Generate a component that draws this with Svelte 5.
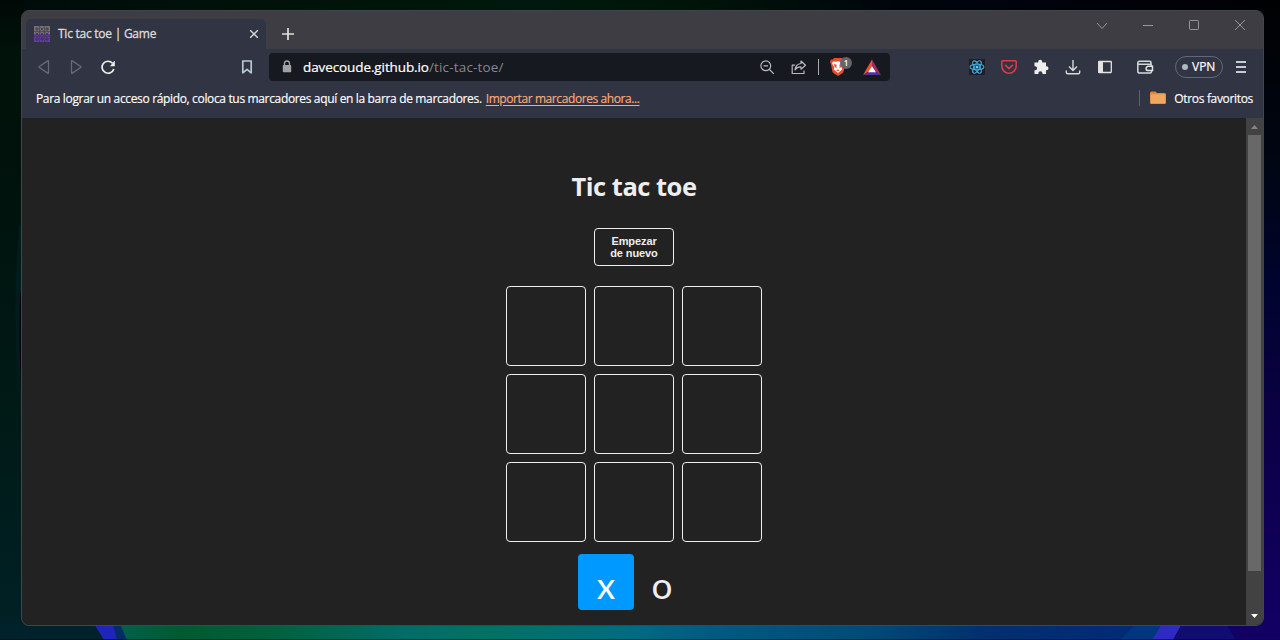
<script>
  const cells = Array(9).fill('');
  let turn = $state('x');
</script>

<div class="desktop">
  <svg class="wallpaper" viewBox="0 0 1280 640" aria-hidden="true">
    <defs>
      <linearGradient id="top"><stop offset="0" stop-color="#000b0a"/><stop offset=".3" stop-color="#00150a"/><stop offset=".42" stop-color="#00180d"/><stop offset=".53" stop-color="#001508"/><stop offset=".7" stop-color="#00050c"/><stop offset=".85" stop-color="#00020a"/><stop offset="1" stop-color="#000103"/></linearGradient>
      <linearGradient id="left" x2="0" y2="1"><stop offset="0" stop-color="#000907"/><stop offset=".08" stop-color="#001209"/><stop offset=".25" stop-color="#00120b"/><stop offset=".65" stop-color="#001a16"/><stop offset="1" stop-color="#002126"/></linearGradient>
      <linearGradient id="right" x2="0" y2="1"><stop offset="0" stop-color="#000102"/><stop offset=".25" stop-color="#000612"/><stop offset=".45" stop-color="#00032e"/><stop offset=".67" stop-color="#0b0046"/><stop offset="1" stop-color="#130066"/></linearGradient>
      <linearGradient id="floor"><stop offset="0" stop-color="#00614b"/><stop offset=".06" stop-color="#005a30"/><stop offset=".14" stop-color="#00603a"/><stop offset=".27" stop-color="#006c66"/><stop offset=".36" stop-color="#007264"/><stop offset=".49" stop-color="#006c80"/><stop offset=".57" stop-color="#005a80"/><stop offset=".72" stop-color="#004b76"/><stop offset=".83" stop-color="#00306e"/><stop offset="1" stop-color="#002978"/></linearGradient>
    </defs>
    <rect width="1280" height="12" fill="url(#top)"/>
    <rect width="24" height="640" fill="url(#left)"/>
    <rect x="1260" width="20" height="640" fill="url(#right)"/>
    <path d="M19 225q-8 95 1 190h4V225z" fill="#001c1c"/>
    <path d="M20 293h3v98h-2q-2-48-1-98z" fill="#000014"/>
    <rect y="624" width="125" height="16" fill="#00222b"/>
    <rect x="118" y="624" width="1040" height="16" fill="url(#floor)"/>
    <path d="M94 624h20l12 16h-22z" fill="#1f25b8"/>
    <path d="M113 624h7l7 16h-10z" fill="#002c68"/>
    <path d="M1120 640l15-15h30v15z" fill="#003680"/>
    <path d="M1152 640l10-16h20l-9 16z" fill="#302bc0"/>
    <path d="M1182 624h50l10 16h-69z" fill="#100c72"/>
    <path d="M1226 624h54v16h-44z" fill="#120062"/>
    <path d="M0 639.5h1280" stroke="#000b18" stroke-opacity=".6"/>
  </svg>

  <div class="window">
    <header class="titlebar">
      <div class="tab">
        <svg class="favicon" width="16" height="16" viewBox="0 0 16 16">
          <rect width="16" height="8" fill="#77706e"/><rect y="8" width="16" height="8" fill="#6339ae"/>
          <path d="M0 5.500h16M0 10.500h16M5.500 0v16M10.500 0v16" stroke="#3a3546" stroke-width=".6"/>
          <path d="M2 2h2v2H2zM12 2h2v2h-2zM2 12h2v2H2zM7 12h2v2H7zM12 12h2v2h-2zM6.500 1.500l3 3m0-3l-3 3M1.500 6.500l3 3m0-3l-3 3M6.500 6.500l3 3m0-3l-3 3M11.500 6.500l3 3m0-3l-3 3" fill="none" stroke="#302b49" stroke-width=".7"/>
        </svg>
        <span class="tab-title">Tic tac toe | Game</span>
        <svg class="close-tab" width="10" height="10" viewBox="0 0 10 10"><path d="M1.200 1.200l7.600 7.600m0-7.600L1.200 8.800" stroke="#d8d8d8" stroke-width="1.400"/></svg>
      </div>
      <svg class="new-tab" width="12" height="12" viewBox="0 0 12 12"><path d="M6 0v12M0 6h12" stroke="#e3e0dc" stroke-width="1.700"/></svg>
      <div class="controls">
        <svg width="46" height="30" viewBox="0 0 46 30"><path d="M18 12l5 5.500 5-5.500" class="ctl"/></svg>
        <svg width="46" height="30" viewBox="0 0 46 30"><path d="M18 14.500h10" class="ctl"/></svg>
        <svg width="46" height="30" viewBox="0 0 46 30"><rect x="18.500" y="9.500" width="9" height="9" rx=".8" class="ctl"/></svg>
        <svg width="46" height="30" viewBox="0 0 46 30"><path d="M18 9l10 10m0-10L18 19" class="ctl"/></svg>
      </div>
    </header>

    <div class="toolbar">
      <svg class="icon" viewBox="-16 -16 32 32"><path d="M4.500-5.800v11.600q0 .8-.8.300L-4.700.6q-.7-.6 0-1.200l8.400-5.500q.8-.500.800.300z" fill="none" stroke="#696b72" stroke-width="1.300"/></svg>
      <svg class="icon" viewBox="-16 -16 32 32"><path d="M-4.500-5.800v11.600q0 .8.800.300L4.700.6q.7-.6 0-1.200l-8.400-5.500q-.8-.5-.8.300z" fill="none" stroke="#696b72" stroke-width="1.300"/></svg>
      <svg class="icon" viewBox="-16 -16 32 32"><path d="M4.500-3.800A6 6 0 1 0 5.800 2" fill="none" stroke="#eeeeea" stroke-width="1.700"/><path d="M6.800-5.600v4.300q0 .6-.6.600H2l4-5.100q.8-.6.8.200z" fill="#eeeeea"/></svg>
      <svg class="icon bookmark" viewBox="-16 -16 32 32"><path d="M-4.200-6h8.400V5.800L0 2.300l-4.200 3.500z" fill="none" stroke="#bac7ce" stroke-width="1.700" stroke-linejoin="round"/></svg>
      <div class="address">
        <svg class="lock" width="10" height="14" viewBox="0 0 10 14"><path d="M2.500 6V3.500a2.500 2.500 0 0 1 5 0V6" fill="none" stroke="#a0a2a5" stroke-width="1.300"/><rect x=".8" y="5" width="8.400" height="7.200" rx=".8" fill="#a0a2a5"/></svg>
        <span class="url"><b>davecoude.github.io</b><span>/tic-tac-toe/</span></span>
        <svg class="icon" viewBox="-16 -16 32 32"><circle cx="-1.200" cy="-1.200" r="4.900" class="thin"/><path d="M2.500 2.500L6.800 6.800M-3.500-1.200h4.600" class="thin"/></svg>
        <svg class="icon share" viewBox="-16 -16 32 32"><path d="M-4-1.800h-2.800v8.300H5V3.400M2-6L6.500-1.800 2 2.200V0q-4-.3-6 2.800 .6-5.700 6-6.300z" class="thin" stroke-linejoin="round"/></svg>
        <i class="divider"></i>
        <div class="shield">
          <svg width="16" height="18" viewBox="0 0 16 18"><path d="M4 0h8l1.500 1.800 1.800-.2.700 2.700-.8 1.500-1.500 7.500q-.4 1.400-2.500 2.800L8 18l-3.200-1.900q-2.100-1.400-2.500-2.800L.8 5.800 0 4.300l.7-2.700 1.800.2z" fill="#e94b2b"/><path d="M3 3.500l3 .3 2-.5 2 .5 3-.3 1 2-2.400 4 .6 2L8 15l-4.200-3.500.6-2L2 5.500z" fill="#fff"/><path d="M4 6l2.800.7L6.200 9l1 1.500L4.600 9zM12 6l-2.800.7.6 2.300-1 1.500L11.400 9zM6.200 12.300L8 11.500l1.800.8L8 13.300z" fill="#e94b2b"/></svg>
          <span class="count">1</span>
        </div>
        <svg class="bat" width="18" height="17" viewBox="0 0 18 17"><path d="M9 .5L0 16l9-5.500z" fill="#f25130"/><path d="M9 .5L18 16 9 10.500z" fill="#a32b63"/><path d="M0 16l5.500-3.500h7L18 16z" fill="#513394"/><path d="M9 7.200l-4 6h8z" fill="#fff"/></svg>
      </div>
      <div class="extensions">
        <svg class="icon" viewBox="-16 -16 32 32"><rect x="-8" y="-8" width="16" height="16" fill="#211d23"/><g fill="none" stroke="#43a4d8" stroke-width="1.100"><ellipse rx="6.900" ry="2.700"/><ellipse rx="6.900" ry="2.700" transform="rotate(60)"/><ellipse rx="6.900" ry="2.700" transform="rotate(120)"/></g><circle r="1.500" fill="#6bcaf2"/></svg>
        <svg class="icon" viewBox="-16 -16 32 32"><path d="M-6.200-6.200H6.200q1 0 1 1V-1a7.200 7.200 0 0 1-14.400 0v-4.200q0-1 1-1z" fill="none" stroke="#d83c4c" stroke-width="1.600"/><path d="M-3.500-1.700L0 1.600 3.500-1.700" fill="none" stroke="#d83c4c" stroke-width="1.700" stroke-linecap="round"/></svg>
        <svg class="icon" viewBox="-16 -16 32 32"><path d="M-6.500-4.500h3.700v-.7a2 2 0 0 1 4 0v.7H5V-.8h.5a2 2 0 0 1 0 4H5v3.700H1.400v-.6a2 2 0 0 0-4 0v.6h-3.900V3.200h.6a2 2 0 0 0 0-4h-.6z" fill="#efeeec"/></svg>
        <svg class="icon" viewBox="-16 -16 32 32"><path d="M0-7V3.500M-4-.5l4 4 4-4M-6.700 3.500v1.700q0 1.500 1.500 1.500H5.200q1.500 0 1.500-1.500V3.500" fill="none" stroke="#d8dadb" stroke-width="1.400"/></svg>
        <svg class="icon" viewBox="-16 -16 32 32"><rect x="-6.300" y="-5.500" width="12.600" height="11" rx=".5" fill="none" stroke="#e5e3df" stroke-width="1.300"/><path d="M-6.500-6H-2V6h-4.500z" fill="#e5e3df"/></svg>
        <svg class="icon wallet" viewBox="-16 -16 32 32"><path d="M-7.200-3.500v7.800q0 1.800 1.800 1.800H5q1.500 0 1.500-1.500V-1.200q0-1.500-1.500-1.500H-5.200q-2 0-2-1.400 0-1.600 1.800-1.600H4.700q1.300 0 1.300 1.200v1.800" fill="none" stroke="#d3dada" stroke-width="1.500"/><path d="M7.500-.7H3.200a2.100 2.100 0 0 0 0 4.200h4.300z" fill="#313443" stroke="#e2e5e2" stroke-width="1.500"/></svg>
        <div class="vpn"><i></i><span>VPN</span></div>
        <svg class="icon menu" viewBox="-16 -16 32 32"><path d="M-5-5H5M-5 0H5M-5 5H5" stroke="#c5cdd0" stroke-width="2"/></svg>
      </div>
    </div>

    <div class="bookmarks">
      <span class="hint">Para lograr un acceso rápido, coloca tus marcadores aquí en la barra de marcadores.</span>
      <span class="import">Importar marcadores ahora...</span>
      <div class="other"><svg width="16" height="14" viewBox="0 0 16 14"><path d="M0 2q0-1.500 1.500-1.500h4L7 2h7.500Q16 2 16 3.500v8q0 1.500-1.500 1.500h-13Q0 13 0 11.500z" fill="#d98b3e"/><path d="M.7 3.300h14.600v9H.7z" fill="#f0a75f"/></svg><span>Otros favoritos</span></div>
    </div>

    <div class="page">
      <main>
        <h1>Tic tac toe</h1>
        <button class="reset" onclick={() => (turn = 'x')}>Empezar<br />de nuevo</button>
        <section class="board">
          {#each cells as cell}<div class="square">{cell}</div>{/each}
        </section>
        <section class="turns">
          <div class="turn" class:selected={turn === 'x'}><span>x</span></div>
          <div class="turn" class:selected={turn === 'o'}><span>o</span></div>
        </section>
      </main>
      <aside class="scrollbar">
        <svg width="17" height="17" viewBox="0 0 17 17"><path d="M5 11l3.500-4L12 11z" fill="#8b8082"/></svg>
        <div class="thumb"></div>
        <svg class="down" width="17" height="17" viewBox="0 0 17 17"><path d="M5 6h7l-3.500 4z" fill="#fff"/></svg>
      </aside>
    </div>
  </div>
</div>

<style>
  :global(body) { margin: 0; background: #000b0a; }
  * { box-sizing: border-box; }
  svg { display: block; flex: none; }
  .desktop { width: 1280px; height: 640px; padding: 10px 16px 14px 21px; position: relative; overflow: hidden; font-family: "Open Sans", "Noto Sans", sans-serif; }
  .wallpaper { position: absolute; inset: 0; width: 1280px; height: 640px; }
  .window { position: relative; height: 616px; border: 1px solid #3e4749; border-radius: 8px; overflow: hidden; display: flex; flex-direction: column; background: #313443; }
  .titlebar { height: 38px; flex: none; background: #3e3d44; display: flex; align-items: flex-start; padding-left: 4px; }
  .tab { margin-top: 8px; width: 240px; height: 30px; background: #313443; border-radius: 5px 5px 0 0; display: flex; align-items: center; padding: 0 7px 0 8px; }
  .tab-title { margin: 0 0 2px 8px; font-size: 12px; letter-spacing: -.25px; color: #dfdcd8; white-space: nowrap; -webkit-text-stroke: .3px; }
  .close-tab { margin-left: auto; }
  .new-tab { margin: 17px 0 0 16px; }
  .controls { display: flex; margin-left: auto; }
  .ctl { fill: none; stroke: #96959a; stroke-width: 1; }
  .toolbar { height: 36px; flex: none; display: flex; align-items: center; padding-left: 6px; }
  .icon { width: 32px; height: 32px; }
  .bookmark { margin-left: 107px; }
  .address { width: 621px; height: 28px; margin-left: 6px; border-radius: 4px; background: #171920; display: flex; align-items: center; padding: 0 9px 0 13px; }
  .url { margin-left: 11px; flex: 1; font-size: 13.5px; letter-spacing: -.1px; color: #858891; white-space: nowrap; line-height: 20px; }
  .url b { font-weight: 400; color: #fff; -webkit-text-stroke: .2px; }
  .url span { letter-spacing: .17px; }
  .thin { fill: none; stroke: #b8babd; stroke-width: 1.2; }
  .divider { width: 1px; height: 16px; background: #aaa9ad; margin: 0 11px 0 3px; }
  .shield { width: 24px; height: 18px; position: relative; margin-right: 9px; }
  .count { position: absolute; left: 10px; top: -1px; width: 12px; height: 12px; border-radius: 50%; background: #62666b; color: #fff; font-size: 8px; font-weight: 600; line-height: 12px; text-align: center; }
  .extensions { display: flex; align-items: center; margin-left: 71px; }
  .wallet { margin-left: 8px; }
  .vpn { width: 48px; height: 22px; margin-left: 14px; border: 1px solid #626876; border-radius: 11px; display: flex; align-items: center; color: #fff; font-size: 12px; line-height: 18px; padding: 0 0 1px 6px; -webkit-text-stroke: .2px; }
  .vpn i { width: 6px; height: 6px; background: #aeb8bd; border-radius: 50%; margin-right: 4px; }
  .menu { margin-left: 2px; }
  .bookmarks { height: 33px; flex: none; display: flex; align-items: center; padding: 0 10px 7px 14px; font-size: 12px; letter-spacing: -.345px; color: #fff; white-space: nowrap; -webkit-text-stroke: .15px; }
  .import { margin-left: 4px; color: #ffa875; letter-spacing: -.41px; text-decoration: underline; text-underline-offset: 2px; }
  .other { margin-left: auto; height: 16px; border-left: 1px solid #5e616c; display: flex; align-items: center; gap: 8px; padding-left: 10px; letter-spacing: -.33px; }
  .page { height: 507px; display: flex; background: #222; }
  main { flex: 1; display: flex; flex-direction: column; align-items: center; color: #eee; }
  h1 { margin: 51px 0 0; height: 35px; line-height: 34px; font-size: 25.5px; font-weight: 700; letter-spacing: -.5px; white-space: nowrap; }
  .reset { width: 80px; height: 38px; margin: 24px 0 20px; padding: 0; background: transparent; border: 1px solid #eee; border-radius: 4px; color: #eee; letter-spacing: -.1px; font: 700 11px/12px "Liberation Sans", Arial, sans-serif; }
  .board { display: grid; grid-template-columns: repeat(3, 80px); grid-auto-rows: 80px; gap: 8px; }
  .square { border: 1px solid #eee; border-radius: 4px; }
  .turns { display: flex; margin-top: 12px; }
  .turn { width: 56px; height: 56px; border-radius: 4px; display: flex; justify-content: center; font-family: Lato, "Open Sans", sans-serif; font-size: 37px; line-height: 56px; padding-top: 3px; }
  .selected { background: #09f; color: #fff; }
  .scrollbar { width: 17px; background: #424242; display: flex; flex-direction: column; }
  .thumb { width: 13px; height: 436px; margin: 0 2px; background: #686868; }
  .down { margin-top: auto; }
</style>
